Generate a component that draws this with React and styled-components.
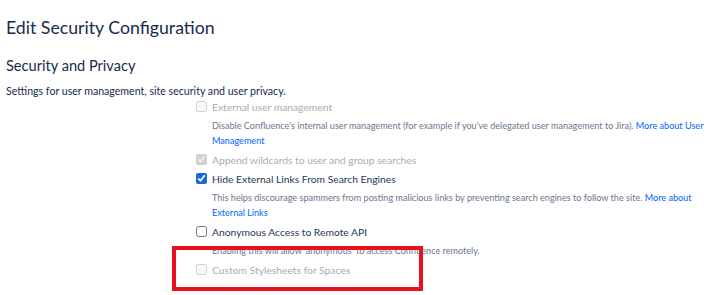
import React from 'react';
import styled, { createGlobalStyle } from 'styled-components';

const GlobalStyle = createGlobalStyle`
  html, body {
    margin: 0;
    padding: 0;
    background: #ffffff;
  }
  body {
    font-family: Lato, "Open Sans", sans-serif;
    color: #172b4d;
  }
`;

const Page = styled.div`
  position: relative;
  width: 719px;
  height: 295px;
  overflow: hidden;
  padding: 16px 0 0 6px;
  box-sizing: border-box;
`;

const Title = styled.h1`
  margin: 0;
  font-size: 17.7px;
  line-height: 24px;
  font-weight: 400;
  color: #172b4d;
`;

const SectionTitle = styled.h2`
  margin: 16px 0 0;
  font-size: 14.6px;
  line-height: 20px;
  font-weight: 400;
  color: #172b4d;
`;

const Intro = styled.p`
  margin: 8px 0 0;
  font-size: 10.6px;
  line-height: 15px;
  color: #172b4d;
`;

const OptionList = styled.div`
  display: flex;
  flex-direction: column;
  margin: -2px 0 0 190px;
`;

const Option = styled.div`
  display: flex;
  flex-direction: column;
`;

const OptionRow = styled.label`
  display: flex;
  align-items: center;
  gap: 5px;
  height: 19px;
  font-size: 10.3px;
  color: ${(p) => (p.disabled ? '#a5adba' : '#253858')};
`;

const Check = styled.input.attrs({ type: 'checkbox' })`
  width: 11px;
  height: 11px;
  margin: 0;
  accent-color: #1868db;
`;

const Description = styled.div`
  margin: 2px 0;
  padding-left: 16px;
  font-size: 9.1px;
  line-height: 15px;
  color: #6b778c;
`;

const Link = styled.a`
  color: #0065ff;
  text-decoration: none;
`;

const Highlight = styled.div`
  position: absolute;
  left: 172px;
  top: 246px;
  width: 251px;
  height: 45px;
  border: 4px solid #e81123;
  box-sizing: border-box;
  pointer-events: none;
`;

const options = [
  {
    label: 'External user management',
    disabled: true,
    checked: false,
    text: "Disable Confluence's internal user management (for example if you've delegated user management to Jira).",
    link: 'More about User Management',
  },
  { label: 'Append wildcards to user and group searches', disabled: true, checked: true },
  {
    label: 'Hide External Links From Search Engines',
    checked: true,
    text: 'This helps discourage spammers from posting malicious links by preventing search engines to follow the site.',
    link: 'More about External Links',
  },
  {
    label: 'Anonymous Access to Remote API',
    checked: false,
    text: "Enabling this will allow 'anonymous' to access Confluence remotely.",
  },
  { label: 'Custom Stylesheets for Spaces', disabled: true, checked: false },
];

const App = () => {
  return (
    <>
      <GlobalStyle />
      <Page>
        <Title>Edit Security Configuration</Title>
        <SectionTitle>Security and Privacy</SectionTitle>
        <Intro>Settings for user management, site security and user privacy.</Intro>
        <OptionList>
          {options.map((o) => (
            <Option key={o.label}>
              <OptionRow disabled={o.disabled}>
                <Check defaultChecked={o.checked} disabled={o.disabled} />
                {o.label}
              </OptionRow>
              {o.text && (
                <Description>
                  {o.text} {o.link && <Link href="#">{o.link}</Link>}
                </Description>
              )}
            </Option>
          ))}
        </OptionList>
        <Highlight />
      </Page>
    </>
  );
};

export default App;
